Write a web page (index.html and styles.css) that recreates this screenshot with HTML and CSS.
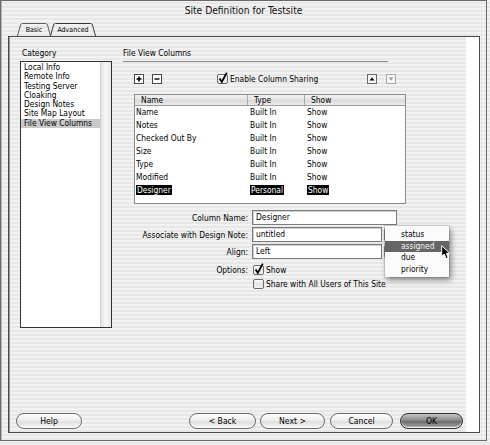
FILE: index.html
```html
<!DOCTYPE html>
<html>
<head>
<meta charset="utf-8">
<title>Site Definition for Testsite</title>
<link rel="stylesheet" href="styles.css">
</head>
<body>
<div class="window">
  <div class="titlebar">Site Definition for Testsite</div>
  <div class="tabs">
    <div class="tab tab-basic">
      <svg class="tab-shape" width="34" height="13" viewBox="0 0 34 13"><path d="M0.5,13 L3.5,2 Q4,0.5 5.5,0.5 L28.5,0.5 Q30,0.5 30.5,2 L33.5,13" fill="none" stroke="#5a5a5a" stroke-width="1"/></svg>
      <span class="tab-text">Basic</span>
    </div>
    <div class="tab tab-adv">
      <svg class="tab-shape" width="46" height="13" viewBox="0 0 46 13"><path d="M0.5,13 L3.5,2 Q4,0.5 5.5,0.5 L40.5,0.5 Q42,0.5 42.5,2 L45.5,13" fill="none" stroke="#3a3a3a" stroke-width="1"/></svg>
      <span class="tab-text">Advanced</span>
    </div>
  </div>
  <div class="panel">
    <div class="panel-body">
      <div class="category">
        <div class="cat-label">Category</div>
        <div class="list">
          <ul class="list-items">
            <li>Local Info</li>
            <li>Remote Info</li>
            <li>Testing Server</li>
            <li>Cloaking</li>
            <li>Design Notes</li>
            <li>Site Map Layout</li>
            <li class="sel">File View Columns</li>
          </ul>
          <div class="scrollbar"></div>
        </div>
      </div>
      <div class="main">
        <div class="heading">File View Columns</div>
        <div class="toolbar">
          <span class="sq-btn plus"><svg width="10" height="10" viewBox="0 0 10 10"><rect x="0.5" y="0.5" width="9" height="9" fill="#fff" stroke="#4a4a4a"/><path d="M2.5,5 H7.5 M5,2.5 V7.5" stroke="#000" stroke-width="1.6"/></svg></span>
          <span class="sq-btn minus"><svg width="10" height="10" viewBox="0 0 10 10"><rect x="0.5" y="0.5" width="9" height="9" fill="#fff" stroke="#4a4a4a"/><path d="M2.5,5 H7.5" stroke="#000" stroke-width="1.4"/></svg></span>
          <div class="check-group">
            <span class="checkbox"><svg width="11" height="11" viewBox="0 0 11 11"><rect x="0.5" y="1.5" width="10" height="9" rx="1.5" fill="url(#cbg)" stroke="#6b6b6b"/><path d="M2.6,5.6 L4.8,8.9 L9.8,-0.4" fill="none" stroke="#000" stroke-width="1.8"/></svg></span>
            <span class="check-text">Enable Column Sharing</span>
          </div>
          <span class="sq-btn up"><svg width="10" height="10" viewBox="0 0 10 10"><rect x="0.5" y="0.5" width="9" height="9" fill="#f4f4f4" stroke="#6a6a6a"/><path d="M2.5,6.5 L5,3.5 L7.5,6.5 Z" fill="#000"/></svg></span>
          <span class="sq-btn down"><svg width="10" height="10" viewBox="0 0 10 10"><rect x="0.5" y="0.5" width="9" height="9" fill="#f7f7f7" stroke="#a8a8a8"/><path d="M2.5,3.5 L7.5,3.5 L5,6.5 Z" fill="#9a9a9a"/></svg></span>
        </div>
        <div class="table">
          <div class="thead">
            <div class="th">Name</div>
            <div class="th">Type</div>
            <div class="th last">Show</div>
          </div>
          <div class="tr"><div class="td">Name</div><div class="td">Built In</div><div class="td">Show</div></div>
          <div class="tr"><div class="td">Notes</div><div class="td">Built In</div><div class="td">Show</div></div>
          <div class="tr"><div class="td">Checked Out By</div><div class="td">Built In</div><div class="td">Show</div></div>
          <div class="tr"><div class="td">Size</div><div class="td">Built In</div><div class="td">Show</div></div>
          <div class="tr"><div class="td">Type</div><div class="td">Built In</div><div class="td">Show</div></div>
          <div class="tr"><div class="td">Modified</div><div class="td">Built In</div><div class="td">Show</div></div>
          <div class="tr selected"><div class="td"><span class="hl">Designer</span></div><div class="td"><span class="hl">Personal</span></div><div class="td"><span class="hl">Show</span></div></div>
        </div>
        <div class="form">
          <div class="form-row">
            <div class="form-label">Column Name:</div>
            <div class="input wide">Designer</div>
          </div>
          <div class="form-row">
            <div class="form-label">Associate with Design Note:</div>
            <div class="input">untitled</div>
            <span class="popup-btn"></span>
          </div>
          <div class="form-row">
            <div class="form-label">Align:</div>
            <div class="input">Left</div>
            <span class="popup-btn"></span>
          </div>
          <div class="check-row first">
            <div class="form-label">Options:</div>
            <span class="checkbox"><svg width="11" height="11" viewBox="0 0 11 11"><rect x="0.5" y="1.5" width="10" height="9" rx="1.5" fill="url(#cbg)" stroke="#6b6b6b"/><path d="M2.6,5.6 L4.8,8.9 L9.8,-0.4" fill="none" stroke="#000" stroke-width="1.8"/></svg></span>
            <span class="check-text">Show</span>
          </div>
          <div class="check-row">
            <div class="form-label"></div>
            <span class="checkbox"><svg width="11" height="11" viewBox="0 0 11 11"><rect x="0.5" y="1.5" width="10" height="9" rx="1.5" fill="url(#cbg)" stroke="#6b6b6b"/></svg></span>
            <span class="check-text">Share with All Users of This Site</span>
          </div>
        </div>
      </div>
    </div>
    <div class="buttons">
      <div class="btn help">Help</div>
      <div class="btn back">&lt; Back</div>
      <div class="btn next">Next &gt;</div>
      <div class="btn cancel">Cancel</div>
      <div class="btn ok">OK</div>
    </div>
  </div>
  <div class="popup-menu">
    <div class="menu-item">status</div>
    <div class="menu-item active">assigned</div>
    <div class="menu-item">due</div>
    <div class="menu-item">priority</div>
  </div>
  <svg class="cursor" width="11" height="15" viewBox="0 0 11 15"><path d="M0.7,0.7 L0.7,11.5 L3.2,9 L5.2,13.6 L7.2,12.7 L5.3,8.3 L8.8,8.3 Z" fill="#000" stroke="#fff" stroke-width="1"/></svg>
  <svg width="0" height="0" class="defs"><defs><linearGradient id="cbg" x1="0" y1="0" x2="0" y2="1"><stop offset="0" stop-color="#ffffff"/><stop offset="0.5" stop-color="#e4e4e4"/><stop offset="1" stop-color="#f6f6f6"/></linearGradient></defs></svg>
</div>
</body>
</html>
```
FILE: styles.css
```css
* { box-sizing: border-box; }
html, body { margin: 0; padding: 0; }
body {
  width: 490px;
  height: 445px;
  overflow: hidden;
  font-family: "DejaVu Sans Condensed", "DejaVu Sans", sans-serif;
  font-size: 8.4px;
  color: #000;
  background: repeating-linear-gradient(to bottom, #f2f2f2 0 2px, #e7e7e7 2px 4px);
}
.window {
  position: relative;
  width: 487px;
  height: 441px;
  border: 1px solid #6a6a6a;
  display: flex;
  flex-direction: column;
  box-shadow: inset 1px 0 0 #b8b8b8;
}
.defs { position: absolute; }
.titlebar {
  height: 22px;
  line-height: 20px;
  text-align: center;
  font-size: 10.2px;
  color: #111;
}
.tabs {
  height: 13px;
  display: flex;
  margin-left: 16px;
}
.tab {
  position: relative;
  height: 13px;
  display: flex;
  align-items: center;
  justify-content: center;
  font-size: 7px;
  padding-top: 1px;
}
.tab-shape { position: absolute; left: 0; top: 0; }
.tab-text { position: relative; }
.tab-basic { width: 34px; }
.tab-adv { width: 46px; margin-left: -1px; }
.panel {
  margin-left: 7px;
  width: 472px;
  height: 397px;
  border: 1px solid #4a4a4a;
  display: flex;
  flex-direction: column;
  box-shadow: inset -13px 0 0 #ffffff, inset 1px 0 0 #9a9a9a;
}
.panel-body {
  display: flex;
  padding: 10px 0 0 11px;
}
.category { width: 92px; }
.cat-label {
  height: 12px;
  line-height: 12px;
  margin-bottom: 2px;
  padding-left: 2px;
}
.list {
  height: 267px;
  border: 1px solid #333;
  background: #fff;
  display: flex;
}
.list-items {
  flex: 1;
  margin: 0;
  padding: 1px 0 0 0;
  list-style: none;
}
.list-items li {
  height: 9.3px;
  line-height: 9.3px;
  padding-left: 3px;
  white-space: nowrap;
}
.list-items li.sel { background: #c9c9c9; }
.scrollbar {
  width: 11px;
  background: linear-gradient(to right, #e2e2e2, #f7f7f7 45%, #ebebeb);
  border-left: 1px solid #d4d4d4;
}
.main {
  margin-left: 11px;
  width: 290px;
}
.heading {
  width: 265px;
  height: 15px;
  line-height: 12px;
  border-bottom: 1px solid #8a8a8a;
}
.toolbar {
  height: 11px;
  margin-top: 11px;
  display: flex;
  align-items: center;
}
.sq-btn { display: block; width: 10px; height: 10px; }
.sq-btn svg { display: block; }
.plus { margin-left: 11px; }
.minus { margin-left: 8px; }
.check-group {
  margin-left: 55px;
  width: 150px;
  display: flex;
  align-items: center;
}
.checkbox { display: block; width: 11px; height: 11px; }
.checkbox svg { display: block; overflow: visible; }
.check-text { margin-left: 2px; white-space: nowrap; }
.down { margin-left: 9px; }
.table {
  margin-top: 10px;
  margin-left: 11px;
  width: 272px;
  height: 110px;
  border: 1px solid #8c8c8c;
  background: #fff;
}
.thead, .tr {
  display: grid;
  grid-template-columns: 113px 57px 1fr;
}
.thead {
  height: 11px;
  background: linear-gradient(to bottom, #f4f4f4, #e2e2e2 50%, #d9d9d9 51%, #ececec);
  border-bottom: 1px solid #9c9c9c;
}
.th {
  line-height: 10px;
  padding-left: 6px;
  border-right: 1px solid #a8a8a8;
}
.th.last { border-right: none; }
.tr { height: 13px; }
.td {
  line-height: 13px;
  padding-left: 1px;
  white-space: nowrap;
}
.td + .td { padding-left: 2px; }
.hl {
  display: inline-block;
  background: #000;
  color: #fff;
  line-height: 10px;
  padding: 0 1px;
}
.form { margin-top: 5px; }
.form-row {
  display: flex;
  align-items: center;
  height: 17px;
}
.form-label {
  width: 125px;
  margin-right: 4px;
  text-align: right;
  white-space: nowrap;
}
.input {
  width: 130px;
  height: 15px;
  border: 1px solid #7a7a7a;
  background: #fff;
  padding-left: 3px;
  line-height: 13px;
  box-shadow: inset 1px 1px 0 #d0d0d0;
}
.input.wide { width: 145px; }
.popup-btn {
  display: block;
  width: 12px;
  height: 15px;
  margin-left: 2px;
  border: 1px solid #8a8a8a;
  border-radius: 3px;
  background: linear-gradient(to bottom, #f4f4f4, #cfcfcf);
}
.check-row {
  display: flex;
  align-items: center;
  height: 13px;
  margin-top: 1px;
}
.check-row.first { margin-top: 3px; }
.check-row .checkbox { margin-left: 1px; }
.buttons {
  margin-top: auto;
  padding-bottom: 3px;
  display: flex;
}
.btn {
  height: 16px;
  border: 1px solid #6a6a6a;
  border-radius: 8px;
  background: linear-gradient(to bottom, #ffffff, #ececec 48%, #dedede 52%, #f6f6f6);
  text-align: center;
  line-height: 14px;
  font-size: 8.6px;
  box-shadow: inset 0 -1px 1px #ffffff;
}
.help { margin-left: 7px; width: 66px; }
.back { margin-left: 107px; width: 67px; }
.next { margin-left: 4px; width: 65px; }
.cancel { margin-left: 5px; width: 63px; }
.ok {
  margin-left: 7px;
  width: 63px;
  border-color: #2e2e2e;
  background: linear-gradient(to bottom, #c4c4c4, #8a8a8a 45%, #6e6e6e 55%, #a6a6a6);
}
.popup-menu {
  position: absolute;
  left: 384px;
  top: 225px;
  width: 64px;
  height: 51px;
  background: #fbfbfb;
  padding-top: 3px;
  box-shadow: 2px 3px 6px rgba(0, 0, 0, 0.45), 0 0 0 1px rgba(0, 0, 0, 0.12);
}
.menu-item {
  height: 11.5px;
  line-height: 11.5px;
  padding-left: 16px;
}
.menu-item.active {
  background: #656565;
  color: #f4f4f4;
}
.cursor {
  position: absolute;
  left: 440px;
  top: 244px;
}
```
